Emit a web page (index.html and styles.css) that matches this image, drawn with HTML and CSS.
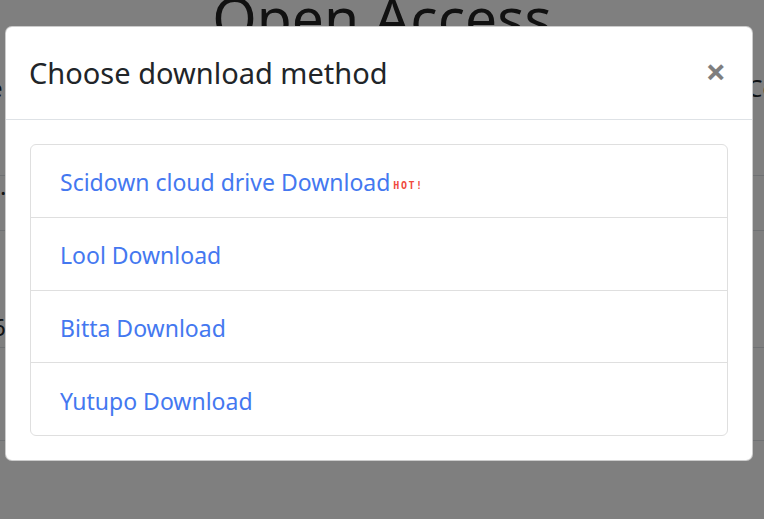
FILE: index.html
```html
<!DOCTYPE html>
<html lang="en">
<head>
<meta charset="utf-8">
<title>Choose download method</title>
<link rel="stylesheet" href="styles.css">
</head>
<body>
<div class="page">
  <h1 class="page-title">Open Access</h1>
  <div class="page-row">
    <span class="side-text">e</span>
    <span class="side-text">Co</span>
  </div>
  <div class="page-table">
    <div class="trow r1"><span class="dot">.</span></div>
    <div class="trow r2"><span class="digit">6</span></div>
    <div class="trow r3"></div>
    <div class="trow r4"></div>
  </div>
</div>
<div class="backdrop"></div>
<div class="modal">
  <div class="modal-header">
    <h5 class="modal-title">Choose download method</h5>
    <button class="close" type="button" aria-label="Close">&times;</button>
  </div>
  <div class="modal-body">
    <div class="list-group">
      <a class="list-item" href="#">Scidown cloud drive Download<span class="hot">HOT!</span></a>
      <a class="list-item" href="#">Lool Download</a>
      <a class="list-item" href="#">Bitta Download</a>
      <a class="list-item" href="#">Yutupo Download</a>
    </div>
  </div>
</div>
</body>
</html>
```
FILE: styles.css
```css
* { box-sizing: border-box; }
html, body {
  margin: 0;
  padding: 0;
  height: 100%;
  overflow: hidden;
}
body {
  background: #fff;
  font-family: "Noto Sans", "Open Sans", sans-serif;
  color: #212529;
  position: relative;
}
.page {
  display: flex;
  flex-direction: column;
}
.page-title {
  margin: -15px 0 0 0;
  text-align: center;
  font-size: 57px;
  font-weight: 400;
  line-height: 64px;
  color: #222;
}
.page-row {
  display: flex;
  justify-content: space-between;
  font-size: 24px;
  line-height: 36px;
  margin: 21px -13px 0 -11px;
}
.page-table {
  display: flex;
  flex-direction: column;
}
.trow {
  border-top: 1px solid #dee2e6;
  position: relative;
  font-size: 24px;
}
.r1 { margin-top: 69px; height: 55px; }
.r2 { height: 117px; }
.r3 { height: 93px; }
.r4 { height: 80px; }
.dot { position: absolute; left: 0; top: -2px; line-height: 1; }
.digit { position: absolute; left: -8px; top: 84px; line-height: 1; }

.backdrop {
  position: absolute;
  inset: 0;
  background: rgba(0, 0, 0, 0.5);
}

.modal {
  position: absolute;
  left: 5px;
  top: 26px;
  width: 748px;
  background: #fff;
  border: 1px solid rgba(0, 0, 0, 0.2);
  border-radius: 7px;
  display: flex;
  flex-direction: column;
}
.modal-header {
  display: flex;
  align-items: flex-start;
  justify-content: space-between;
  padding: 24px 24px 24px 23px;
  border-bottom: 1px solid #dee2e6;
}
.modal-title {
  margin: 0;
  font-size: 29px;
  font-weight: 400;
  line-height: 44px;
  color: #212529;
}
.close {
  border: 0;
  background: transparent;
  padding: 0;
  margin: -1px 2px 0 0;
  font-family: "Noto Sans", sans-serif;
  font-size: 36px;
  line-height: 44px;
  font-weight: 700;
  color: #000;
  opacity: 0.5;
  cursor: pointer;
}
.modal-body {
  padding: 24px;
}
.list-group {
  display: flex;
  flex-direction: column;
  border: 1px solid #dfdfdf;
  border-radius: 6px;
}
.list-item {
  display: block;
  padding: 19px 30px 17px 29px;
  font-size: 23px;
  line-height: 36px;
  height: 73px;
  color: #4478f0;
  text-decoration: none;
  border-top: 1px solid #dfdfdf;
}
.list-item:first-child { border-top: 0; height: 72px; }
.list-item:nth-child(3) { height: 72px; }
.list-item:last-child { height: 73px; padding-top: 20px; }
.hot {
  font-family: "DejaVu Sans Mono", monospace;
  font-size: 10px;
  line-height: 1;
  font-weight: 700;
  color: #f04a3e;
  letter-spacing: 1.5px;
  margin-left: 3px;
  vertical-align: 2px;
}
```
